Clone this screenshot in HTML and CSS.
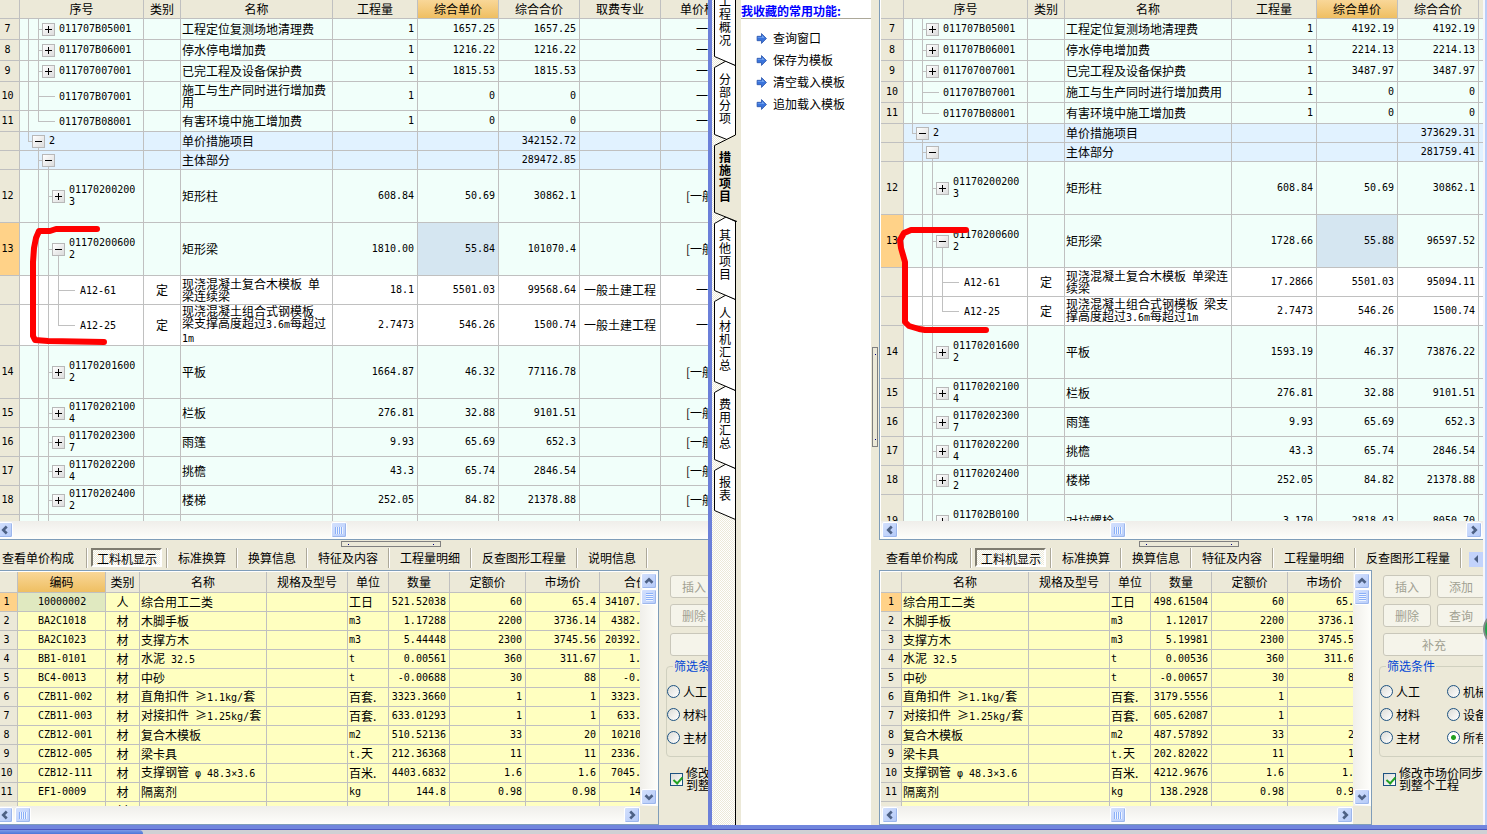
FILE: index.html
```html
<!DOCTYPE html>
<html lang="zh-CN">
<head>
<meta charset="utf-8">
<title>措施项目</title>
<link rel="stylesheet" href="styles.css">
</head>
<body>
<svg class="defs" width="0" height="0" aria-hidden="true">
  <symbol id="chev-left" viewBox="0 0 16 16"><path d="M10 4 L6 8 L10 12" fill="none" stroke="#4d6185" stroke-width="3"/></symbol>
  <symbol id="chev-right" viewBox="0 0 16 16"><path d="M6 4 L10 8 L6 12" fill="none" stroke="#4d6185" stroke-width="3"/></symbol>
  <symbol id="chev-up" viewBox="0 0 16 16"><path d="M4 10 L8 6 L12 10" fill="none" stroke="#4d6185" stroke-width="3"/></symbol>
  <symbol id="chev-down" viewBox="0 0 16 16"><path d="M4 6 L8 10 L12 6" fill="none" stroke="#4d6185" stroke-width="3"/></symbol>
  <symbol id="arrow" viewBox="0 0 10 10"><path d="M1 3 H5 V0.5 L9.5 5 L5 9.5 V7 H1 Z" fill="#3a74dc" stroke="#2450a8" stroke-width="0.7"/><path d="M1.5 3.8 H5.6 V2.2 L7.6 4.4 H1.5 Z" fill="#86b4f5"/></symbol>
</svg>
<div class="desktop">
  <div class="windows">
    <section class="win win-left">
      <div class="upper">
        <div class="sheet">
          <table class="grid green t-left">
            <colgroup><col class="w20"><col class="w124"><col class="w37"><col class="w152"><col class="w85"><col class="w81"><col class="w81"><col class="w81"><col class="w111"></colgroup>
            <thead><tr class="h19"><th></th><th>序号</th><th>类别</th><th>名称</th><th>工程量</th><th class="hot">综合单价</th><th>综合合价</th><th>取费专业</th><th>单价构成文件</th></tr></thead>
            <tbody>
            <tr class="h21"><th>7</th><td class="t2"><div class="node"><button class="tg plus" aria-label="展开"></button><span>011707B05001</span></div></td><td></td><td>工程定位复测场地清理费</td><td class="n">1</td><td class="n">1657.25</td><td class="n">1657.25</td><td></td><td class="p1">一</td></tr>
            <tr class="h21"><th>8</th><td class="t2"><div class="node"><button class="tg plus" aria-label="展开"></button><span>011707B06001</span></div></td><td></td><td>停水停电增加费</td><td class="n">1</td><td class="n">1216.22</td><td class="n">1216.22</td><td></td><td class="p1">一</td></tr>
            <tr class="h21"><th>9</th><td class="t2"><div class="node"><button class="tg plus" aria-label="展开"></button><span>011707007001</span></div></td><td></td><td>已完工程及设备保护费</td><td class="n">1</td><td class="n">1815.53</td><td class="n">1815.53</td><td></td><td class="p1">一</td></tr>
            <tr class="h29"><th>10</th><td class="t2 leaf"><span>011707B07001</span></td><td></td><td>施工与生产同时进行增加费<br>用</td><td class="n">1</td><td class="n">0</td><td class="n">0</td><td></td><td class="p1">一</td></tr>
            <tr class="h21"><th>11</th><td class="t2 leaf end"><span>011707B08001</span></td><td></td><td>有害环境中施工增加费</td><td class="n">1</td><td class="n">0</td><td class="n">0</td><td></td><td class="p1">一</td></tr>
            <tr class="h19 group"><th></th><td class="t1"><div class="node"><button class="tg" aria-label="折叠"></button><span>2</span></div></td><td></td><td>单价措施项目</td><td></td><td></td><td class="n">342152.72</td><td></td><td></td></tr>
            <tr class="h19 group"><th></th><td class="t2s"><div class="node"><button class="tg" aria-label="折叠"></button></div></td><td></td><td>主体部分</td><td></td><td></td><td class="n">289472.85</td><td></td><td></td></tr>
            <tr class="h53"><th>12</th><td class="t3"><div class="node"><button class="tg plus" aria-label="展开"></button><span>01170200200<br>3</span></div></td><td></td><td>矩形柱</td><td class="n">608.84</td><td class="n">50.69</td><td class="n">30862.1</td><td></td><td class="p2">[一般土建]</td></tr>
            <tr class="h53"><th class="cur">13</th><td class="t3 open"><div class="node"><button class="tg" aria-label="折叠"></button><span>01170200600<br>2</span></div></td><td></td><td>矩形梁</td><td class="n">1810.00</td><td class="n sel">55.84</td><td class="n">101070.4</td><td></td><td class="p2">[一般土建]</td></tr>
            <tr class="h29 child"><th></th><td class="t4"><span>A12-61</span></td><td class="c">定</td><td>现浇混凝土复合木模板&ensp;单<br>梁连续梁</td><td class="n">18.1</td><td class="n">5501.03</td><td class="n">99568.64</td><td class="c">一般土建工程</td><td class="p1">一</td></tr>
            <tr class="h41 child"><th></th><td class="t4 end"><span>A12-25</span></td><td class="c">定</td><td>现浇混凝土组合式钢模板<br>梁支撑高度超过<span class="m">3.6m</span>每超过<br><span class="m">1m</span></td><td class="n">2.7473</td><td class="n">546.26</td><td class="n">1500.74</td><td class="c">一般土建工程</td><td class="p1">一</td></tr>
            <tr class="h53"><th>14</th><td class="t3"><div class="node"><button class="tg plus" aria-label="展开"></button><span>01170201600<br>2</span></div></td><td></td><td>平板</td><td class="n">1664.87</td><td class="n">46.32</td><td class="n">77116.78</td><td></td><td class="p2">[一般土建]</td></tr>
            <tr class="h29"><th>15</th><td class="t3"><div class="node"><button class="tg plus" aria-label="展开"></button><span>01170202100<br>4</span></div></td><td></td><td>栏板</td><td class="n">276.81</td><td class="n">32.88</td><td class="n">9101.51</td><td></td><td class="p2">[一般土建]</td></tr>
            <tr class="h29"><th>16</th><td class="t3"><div class="node"><button class="tg plus" aria-label="展开"></button><span>01170202300<br>7</span></div></td><td></td><td>雨篷</td><td class="n">9.93</td><td class="n">65.69</td><td class="n">652.3</td><td></td><td class="p2">[一般土建]</td></tr>
            <tr class="h29"><th>17</th><td class="t3"><div class="node"><button class="tg plus" aria-label="展开"></button><span>01170202200<br>4</span></div></td><td></td><td>挑檐</td><td class="n">43.3</td><td class="n">65.74</td><td class="n">2846.54</td><td></td><td class="p2">[一般土建]</td></tr>
            <tr class="h29"><th>18</th><td class="t3"><div class="node"><button class="tg plus" aria-label="展开"></button><span>01170202400<br>2</span></div></td><td></td><td>楼梯</td><td class="n">252.05</td><td class="n">84.82</td><td class="n">21378.88</td><td></td><td class="p2">[一般土建]</td></tr>
            <tr class="h53"><th></th><td class="t3 bare"></td><td></td><td></td><td></td><td></td><td></td><td></td><td></td></tr>
            </tbody>
          </table>
          <svg class="mark" width="120" height="360" aria-hidden="true"><path d="M97 229 H56 L50 231 H39 L36 238 L34 248 L33 262 V336 L35 340 L48 341 L104 342" fill="none" stroke="#f00" stroke-width="6" stroke-linecap="round" stroke-linejoin="round"/></svg>
        </div>
        <div class="hbar"><button class="sb cut" aria-label="向左"><svg><use href="#chev-left"/></svg></button><span class="gap far"></span><span class="thumb"></span></div>
      </div>
      <div class="split"><i class="grip"></i></div>
      <nav class="tabs">
        <button>查看单价构成</button><button class="on">工料机显示</button><button>标准换算</button><button>换算信息</button><button>特征及内容</button><button>工程量明细</button><button>反查图形工程量</button><button>说明信息</button>
      </nav>
      <div class="lower">
        <div class="pane">
          <div class="view">
          <div class="sheet">
            <table class="grid yellow t-res-left">
              <colgroup><col class="w18"><col class="w88"><col class="w34"><col class="w127"><col class="w81"><col class="w41"><col class="w61"><col class="w76"><col class="w74"><col class="w41"></colgroup>
              <thead><tr class="h21"><th></th><th class="hot">编码</th><th>类别</th><th>名称</th><th>规格及型号</th><th>单位</th><th>数量</th><th>定额价</th><th>市场价</th><th class="part">合价</th></tr></thead>
              <tbody>
              <tr class="h19"><th class="cur">1</th><td class="code pick">10000002</td><td class="c">人</td><td>综合用工二类</td><td></td><td>工日</td><td class="n">521.52038</td><td class="n">60</td><td class="n">65.4</td><td class="n x">34107.</td></tr>
              <tr class="h19"><th>2</th><td class="code">BA2C1018</td><td class="c">材</td><td>木脚手板</td><td></td><td class="m">m3</td><td class="n">1.17288</td><td class="n">2200</td><td class="n">3736.14</td><td class="n x">4382.</td></tr>
              <tr class="h19"><th>3</th><td class="code">BA2C1023</td><td class="c">材</td><td>支撑方木</td><td></td><td class="m">m3</td><td class="n">5.44448</td><td class="n">2300</td><td class="n">3745.56</td><td class="n x">20392.</td></tr>
              <tr class="h19"><th>4</th><td class="code">BB1-0101</td><td class="c">材</td><td>水泥&ensp;<span class="m">32.5</span></td><td></td><td class="m">t</td><td class="n">0.00561</td><td class="n">360</td><td class="n">311.67</td><td class="n x">1.</td></tr>
              <tr class="h19"><th>5</th><td class="code">BC4-0013</td><td class="c">材</td><td>中砂</td><td></td><td class="m">t</td><td class="n">-0.00688</td><td class="n">30</td><td class="n">88</td><td class="n x">-0.</td></tr>
              <tr class="h19"><th>6</th><td class="code">CZB11-002</td><td class="c">材</td><td>直角扣件&ensp;≥<span class="m">1.1kg/</span>套</td><td></td><td>百套.</td><td class="n">3323.3660</td><td class="n">1</td><td class="n">1</td><td class="n x">3323.</td></tr>
              <tr class="h19"><th>7</th><td class="code">CZB11-003</td><td class="c">材</td><td>对接扣件&ensp;≥<span class="m">1.25kg/</span>套</td><td></td><td>百套.</td><td class="n">633.01293</td><td class="n">1</td><td class="n">1</td><td class="n x">633.</td></tr>
              <tr class="h19"><th>8</th><td class="code">CZB12-001</td><td class="c">材</td><td>复合木模板</td><td></td><td class="m">m2</td><td class="n">510.52136</td><td class="n">33</td><td class="n">20</td><td class="n x">10210</td></tr>
              <tr class="h19"><th>9</th><td class="code">CZB12-005</td><td class="c">材</td><td>梁卡具</td><td></td><td><span class="m">t.</span>天</td><td class="n">212.36368</td><td class="n">11</td><td class="n">11</td><td class="n x">2336.</td></tr>
              <tr class="h19"><th>10</th><td class="code">CZB12-111</td><td class="c">材</td><td>支撑钢管&ensp;<span class="m">φ 48.3×3.6</span></td><td></td><td>百米.</td><td class="n">4403.6832</td><td class="n">1.6</td><td class="n">1.6</td><td class="n x">7045.</td></tr>
              <tr class="h19"><th>11</th><td class="code">EF1-0009</td><td class="c">材</td><td>隔离剂</td><td></td><td class="m">kg</td><td class="n">144.8</td><td class="n">0.98</td><td class="n">0.98</td><td class="n x">14</td></tr>
              <tr class="h19"><th></th><td></td><td class="c">材</td><td></td><td></td><td></td><td></td><td></td><td></td><td></td></tr>
              </tbody>
            </table>
          </div>
          <div class="vbar"><button class="sb" aria-label="向上"><svg><use href="#chev-up"/></svg></button><span class="thumb v"></span><span class="fill"></span><button class="sb" aria-label="向下"><svg><use href="#chev-down"/></svg></button></div>
          </div>
          <div class="hbar corner"><button class="sb cut" aria-label="向左"><svg><use href="#chev-left"/></svg></button><span class="thumb"></span><span class="fill"></span><button class="sb" aria-label="向右"><svg><use href="#chev-right"/></svg></button></div>
        </div>
        <form class="side">
          <div class="btns"><button type="button" disabled>插入</button><button type="button" disabled>添加</button><button type="button" disabled>删除</button><button type="button" disabled>查询</button><button type="button" class="wide" disabled>补充</button></div>
          <fieldset><legend>筛选条件</legend>
            <label><input type="radio" name="fa">人工</label><label><input type="radio" name="fa">机械</label>
            <label><input type="radio" name="fa">材料</label><label><input type="radio" name="fa">设备</label>
            <label><input type="radio" name="fa">主材</label><label><input type="radio" name="fa" checked>所有</label>
          </fieldset>
          <label class="sync"><input type="checkbox" checked><span>修改市场价同步<br>到整个工程</span></label>
        </form>
      </div>
    </section>

    <section class="win win-right">
      <nav class="vtabs">
        <svg class="vshape" width="25" height="825" aria-hidden="true">
          <g fill="#fff" stroke="#000" stroke-width="1">
            <path d="M23.5 519.5 L2.5 510.5 V470.5 L14 464 L23.5 468.5"/>
            <path d="M23.5 468.5 L2.5 459.5 V392.5 L14 386 L23.5 390.5"/>
            <path d="M23.5 390.5 L2.5 381.5 V301.5 L14 295 L23.5 299.5"/>
            <path d="M23.5 299.5 L2.5 290.5 V223.5 L14 217 L23.5 221.5"/>
            <path d="M23.5 143 L2.5 134.5 V67.5 L14 61 L23.5 65.5"/>
            <path d="M23.5 65.5 L2.5 56.5 V-5 H23.5"/>
          </g>
          <path d="M25 221.5 L2.5 212.5 V145.5 L14 139 L25 133" fill="#ece9d8"/>
          <path d="M25 221.5 L2.5 212.5 V145.5 L23.5 135" fill="none" stroke="#000"/>
          <path d="M23.5 0 V135 M23.5 221 V825" stroke="#000" stroke-width="1"/>
        </svg>
        <button>工程概况</button><button>分部分项</button><button class="on">措施项目</button><button>其他项目</button><button>人材机汇总</button><button>费用汇总</button><button>报表</button>
      </nav>
      <aside class="fav">
        <h2>我收藏的常用功能:</h2>
        <ul>
          <li><a href="#"><svg><use href="#arrow"/></svg>查询窗口</a></li>
          <li><a href="#"><svg><use href="#arrow"/></svg>保存为模板</a></li>
          <li><a href="#"><svg><use href="#arrow"/></svg>清空载入模板</a></li>
          <li><a href="#"><svg><use href="#arrow"/></svg>追加载入模板</a></li>
        </ul>
      </aside>
      <div class="vsplit"><i class="grip up"></i></div>
      <div class="work">
      <div class="upper framed">
        <div class="sheet">
          <table class="grid green t-right">
            <colgroup><col class="w23"><col class="w124"><col class="w37"><col class="w167"><col class="w85"><col class="w81"><col class="w81"><col class="w81"></colgroup>
            <thead><tr class="h19"><th></th><th>序号</th><th>类别</th><th>名称</th><th>工程量</th><th class="hot">综合单价</th><th>综合合价</th><th></th></tr></thead>
            <tbody>
            <tr class="h21"><th>7</th><td class="t2"><div class="node"><button class="tg plus" aria-label="展开"></button><span>011707B05001</span></div></td><td></td><td>工程定位复测场地清理费</td><td class="n">1</td><td class="n">4192.19</td><td class="n">4192.19</td><td></td></tr>
            <tr class="h21"><th>8</th><td class="t2"><div class="node"><button class="tg plus" aria-label="展开"></button><span>011707B06001</span></div></td><td></td><td>停水停电增加费</td><td class="n">1</td><td class="n">2214.13</td><td class="n">2214.13</td><td></td></tr>
            <tr class="h21"><th>9</th><td class="t2"><div class="node"><button class="tg plus" aria-label="展开"></button><span>011707007001</span></div></td><td></td><td>已完工程及设备保护费</td><td class="n">1</td><td class="n">3487.97</td><td class="n">3487.97</td><td></td></tr>
            <tr class="h21"><th>10</th><td class="t2 leaf"><span>011707B07001</span></td><td></td><td>施工与生产同时进行增加费用</td><td class="n">1</td><td class="n">0</td><td class="n">0</td><td></td></tr>
            <tr class="h21"><th>11</th><td class="t2 leaf end"><span>011707B08001</span></td><td></td><td>有害环境中施工增加费</td><td class="n">1</td><td class="n">0</td><td class="n">0</td><td></td></tr>
            <tr class="h19 group"><th></th><td class="t1"><div class="node"><button class="tg" aria-label="折叠"></button><span>2</span></div></td><td></td><td>单价措施项目</td><td></td><td></td><td class="n">373629.31</td><td></td></tr>
            <tr class="h19 group"><th></th><td class="t2s"><div class="node"><button class="tg" aria-label="折叠"></button></div></td><td></td><td>主体部分</td><td></td><td></td><td class="n">281759.41</td><td></td></tr>
            <tr class="h53"><th>12</th><td class="t3"><div class="node"><button class="tg plus" aria-label="展开"></button><span>01170200200<br>3</span></div></td><td></td><td>矩形柱</td><td class="n">608.84</td><td class="n">50.69</td><td class="n">30862.1</td><td></td></tr>
            <tr class="h53"><th class="cur">13</th><td class="t3 open"><div class="node"><button class="tg" aria-label="折叠"></button><span>01170200600<br>2</span></div></td><td></td><td>矩形梁</td><td class="n">1728.66</td><td class="n sel">55.88</td><td class="n">96597.52</td><td></td></tr>
            <tr class="h29 child"><th></th><td class="t4"><span>A12-61</span></td><td class="c">定</td><td>现浇混凝土复合木模板&ensp;单梁连<br>续梁</td><td class="n">17.2866</td><td class="n">5501.03</td><td class="n">95094.11</td><td></td></tr>
            <tr class="h29 child"><th></th><td class="t4 end"><span>A12-25</span></td><td class="c">定</td><td>现浇混凝土组合式钢模板&ensp;梁支<br>撑高度超过<span class="m">3.6m</span>每超过<span class="m">1m</span></td><td class="n">2.7473</td><td class="n">546.26</td><td class="n">1500.74</td><td></td></tr>
            <tr class="h53"><th>14</th><td class="t3"><div class="node"><button class="tg plus" aria-label="展开"></button><span>01170201600<br>2</span></div></td><td></td><td>平板</td><td class="n">1593.19</td><td class="n">46.37</td><td class="n">73876.22</td><td></td></tr>
            <tr class="h29"><th>15</th><td class="t3"><div class="node"><button class="tg plus" aria-label="展开"></button><span>01170202100<br>4</span></div></td><td></td><td>栏板</td><td class="n">276.81</td><td class="n">32.88</td><td class="n">9101.51</td><td></td></tr>
            <tr class="h29"><th>16</th><td class="t3"><div class="node"><button class="tg plus" aria-label="展开"></button><span>01170202300<br>7</span></div></td><td></td><td>雨篷</td><td class="n">9.93</td><td class="n">65.69</td><td class="n">652.3</td><td></td></tr>
            <tr class="h29"><th>17</th><td class="t3"><div class="node"><button class="tg plus" aria-label="展开"></button><span>01170202200<br>4</span></div></td><td></td><td>挑檐</td><td class="n">43.3</td><td class="n">65.74</td><td class="n">2846.54</td><td></td></tr>
            <tr class="h29"><th>18</th><td class="t3"><div class="node"><button class="tg plus" aria-label="展开"></button><span>01170202400<br>2</span></div></td><td></td><td>楼梯</td><td class="n">252.05</td><td class="n">84.82</td><td class="n">21378.88</td><td></td></tr>
            <tr class="h53"><th>19</th><td class="t3"><div class="node"><button class="tg plus" aria-label="展开"></button><span>011702B0100<br>1</span></div></td><td></td><td>对拉螺栓</td><td class="n">3.170</td><td class="n">2818.43</td><td class="n">8050.70</td><td></td></tr>
            </tbody>
          </table>
          <svg class="mark" width="120" height="360" aria-hidden="true"><path d="M85 230 H40 L30 230 L23 233 L19 240 L20 248 L24 262 V322 L28 326 L38 329 L44 330 H105" fill="none" stroke="#f00" stroke-width="6" stroke-linecap="round" stroke-linejoin="round"/></svg>
        </div>
        <div class="hbar"><button class="sb" aria-label="向左"><svg><use href="#chev-left"/></svg></button><span class="gap mid"></span><span class="thumb"></span><span class="fill"></span><button class="sb" aria-label="向右"><svg><use href="#chev-right"/></svg></button></div>
      </div>
      <div class="split"><i class="grip"></i></div>
      <nav class="tabs">
        <button>查看单价构成</button><button class="on">工料机显示</button><button>标准换算</button><button>换算信息</button><button>特征及内容</button><button>工程量明细</button><button>反查图形工程量</button><button class="more" aria-label="向左滚动"><svg width="14" height="14"><path d="M9 3 V11 L5 7 Z" fill="#4d6185"/></svg></button>
      </nav>
      <div class="lower">
        <div class="pane framed">
          <div class="view">
          <div class="sheet">
            <table class="grid yellow t-res-right">
              <colgroup><col class="w21"><col class="w127"><col class="w81"><col class="w41"><col class="w61"><col class="w76"><col class="w66"></colgroup>
              <thead><tr class="h21"><th></th><th>名称</th><th>规格及型号</th><th>单位</th><th>数量</th><th>定额价</th><th class="last">市场价</th></tr></thead>
              <tbody>
              <tr class="h19"><th class="cur">1</th><td>综合用工二类</td><td></td><td>工日</td><td class="n">498.61504</td><td class="n">60</td><td class="n x">65.</td></tr>
              <tr class="h19"><th>2</th><td>木脚手板</td><td></td><td class="m">m3</td><td class="n">1.12017</td><td class="n">2200</td><td class="n x">3736.1</td></tr>
              <tr class="h19"><th>3</th><td>支撑方木</td><td></td><td class="m">m3</td><td class="n">5.19981</td><td class="n">2300</td><td class="n x">3745.5</td></tr>
              <tr class="h19"><th>4</th><td>水泥&ensp;<span class="m">32.5</span></td><td></td><td class="m">t</td><td class="n">0.00536</td><td class="n">360</td><td class="n x">311.6</td></tr>
              <tr class="h19"><th>5</th><td>中砂</td><td></td><td class="m">t</td><td class="n">-0.00657</td><td class="n">30</td><td class="n x">8</td></tr>
              <tr class="h19"><th>6</th><td>直角扣件&ensp;≥<span class="m">1.1kg/</span>套</td><td></td><td>百套.</td><td class="n">3179.5556</td><td class="n">1</td><td class="x"></td></tr>
              <tr class="h19"><th>7</th><td>对接扣件&ensp;≥<span class="m">1.25kg/</span>套</td><td></td><td>百套.</td><td class="n">605.62087</td><td class="n">1</td><td class="x"></td></tr>
              <tr class="h19"><th>8</th><td>复合木模板</td><td></td><td class="m">m2</td><td class="n">487.57892</td><td class="n">33</td><td class="n x">2</td></tr>
              <tr class="h19"><th>9</th><td>梁卡具</td><td></td><td><span class="m">t.</span>天</td><td class="n">202.82022</td><td class="n">11</td><td class="n x">1</td></tr>
              <tr class="h19"><th>10</th><td>支撑钢管&ensp;<span class="m">φ 48.3×3.6</span></td><td></td><td>百米.</td><td class="n">4212.9676</td><td class="n">1.6</td><td class="n x">1.</td></tr>
              <tr class="h19"><th>11</th><td>隔离剂</td><td></td><td class="m">kg</td><td class="n">138.2928</td><td class="n">0.98</td><td class="n x">0.9</td></tr>
              <tr class="h19"><th></th><td></td><td></td><td></td><td></td><td></td><td class="x"></td></tr>
              </tbody>
            </table>
          </div>
          <div class="vbar"><button class="sb" aria-label="向上"><svg><use href="#chev-up"/></svg></button><span class="thumb v"></span><span class="fill"></span><button class="sb" aria-label="向下"><svg><use href="#chev-down"/></svg></button></div>
          </div>
          <div class="hbar corner"><button class="sb" aria-label="向左"><svg><use href="#chev-left"/></svg></button><span class="gap mid"></span><span class="thumb"></span><span class="fill"></span><button class="sb" aria-label="向右"><svg><use href="#chev-right"/></svg></button></div>
        </div>
        <form class="side">
          <div class="btns"><button type="button" disabled>插入</button><button type="button" disabled>添加</button><button type="button" disabled>删除</button><button type="button" disabled>查询</button><button type="button" class="wide" disabled>补充</button></div>
          <fieldset><legend>筛选条件</legend>
            <label><input type="radio" name="fb">人工</label><label><input type="radio" name="fb">机械</label>
            <label><input type="radio" name="fb">材料</label><label><input type="radio" name="fb">设备</label>
            <label><input type="radio" name="fb">主材</label><label><input type="radio" name="fb" checked>所有</label>
          </fieldset>
          <label class="sync"><input type="checkbox" checked><span>修改市场价同步<br>到整个工程</span></label>
        </form>
      </div>
      </div>
      <div class="edge"><i class="orb"></i></div>
    </section>
  </div>
  <footer class="taskbar"><span class="task"></span></footer>
</div>
</body>
</html>
```

FILE: styles.css
```css
* { box-sizing: border-box; }
body {
  margin: 0;
  font: 12px/12px "Noto Sans CJK SC", "Liberation Sans", sans-serif;
  color: #000;
  background: #ece9d8;
}
button { font: inherit; color: inherit; margin: 0; padding: 0; border: 0; background: none; }
.defs { display: none; }
.desktop { display: flex; flex-direction: column; height: 100vh; overflow: hidden; }
.windows { flex: 1; min-height: 0; display: grid; grid-template-columns: minmax(0, 712fr) minmax(0, 775fr); }
.win { min-width: 0; min-height: 0; border-bottom: 4px solid #7186dd; background: #ece9d8; }
.win-left { display: flex; flex-direction: column; border-right: 4px solid #6b7fd9; overflow: hidden; }
.win-right { display: flex; overflow: hidden; }
.work { flex: 1; min-width: 0; display: flex; flex-direction: column; }
.taskbar { height: 5px; background: #d0d0d4; border-top: 1px solid #4b55c0; }
.task { display: block; width: 143px; height: 4px; background: linear-gradient(#7d9be8, #4d75d8); border-radius: 0 4px 0 0; }

/* upper sheet */
.upper { flex: 1; min-height: 0; display: flex; flex-direction: column; border-bottom: 1px solid #7f9db9; }
.framed { border-left: 1px solid #7f9db9; padding-left: 1px; background: #fff; }
.sheet { flex: 1; min-width: 0; min-height: 0; overflow: hidden; position: relative; }
.mark { position: absolute; left: 0; top: 0; pointer-events: none; }

.grid { table-layout: fixed; border-collapse: separate; border-spacing: 0; }
.t-left { width: 772px; }
.t-right { width: 679px; }
.t-res-left { width: 641px; }
.t-res-right { width: 473px; }
.grid th, .grid td {
  padding: 0 1px; border: 0 solid #c0c0c0; border-width: 0 1px 1px 0;
  overflow: hidden; white-space: nowrap; text-align: left; vertical-align: middle; font-weight: normal;
}
.grid th { background: #ece9d8; text-align: center; }
.grid tbody th { font: 10px/12px "DejaVu Sans Mono", monospace; padding: 0; }
.win-left .grid tbody th { padding-right: 4px; }
.grid th.hot { background: linear-gradient(#f9d798, #efbf62); }
.grid tbody th.cur { background: #ffd288; }
.green td { background-color: #f1fffa; }
.green .group td { background-color: #e1f2ff; }
.green .child td { background-color: #fff; }
.green td.sel { background-color: #d5e6f1; }
.yellow td { background-color: #ffffc0; }
.yellow td.pick { background-color: #e0e9c0; }
.grid td.n, .grid td.m, .m, .grid td.code, .node span, .leaf span, .t4 span { font-family: "DejaVu Sans Mono", monospace; font-size: 10px; line-height: 12px; }
.grid td.n { text-align: right; padding-right: 3px; }
.grid td.x { padding-right: 0; border-right: 0; }
.grid td.c { text-align: center; }
.grid td.code { padding-left: 20px; }
.grid td.p1 { padding-left: 35px; }
.grid td.p2 { padding-left: 25px; }
.grid th.part { text-align: left; padding-left: 24px; }
.grid th.last { text-align: right; padding-right: 12px; border-right: 0; }

.h19 { height: 19px; } .h21 { height: 21px; } .h29 { height: 29px; } .h41 { height: 41px; } .h53 { height: 53px; }
.w18 { width: 18px; } .w20 { width: 20px; } .w21 { width: 21px; } .w23 { width: 23px; } .w34 { width: 34px; }
.w37 { width: 37px; } .w41 { width: 41px; } .w61 { width: 61px; } .w66 { width: 66px; } .w74 { width: 74px; }
.w76 { width: 76px; } .w81 { width: 81px; } .w85 { width: 85px; } .w88 { width: 88px; } .w111 { width: 111px; }
.w124 { width: 124px; } .w127 { width: 127px; } .w152 { width: 152px; } .w167 { width: 167px; }

/* tree guides */
.grid td { --ln: linear-gradient(#c0c0c0, #c0c0c0); background-repeat: no-repeat; }
.node { display: flex; align-items: center; gap: 4px; }
.grid .t1 { padding-left: 12px; background-image: var(--ln), var(--ln), var(--ln); background-position: 8px 0, 8px 50%, 18px 100%; background-size: 1px 50%, 5px 1px, 1px 50%; }
.grid .t2 { padding-left: 22px; background-image: var(--ln), var(--ln), var(--ln); background-position: 8px 0, 18px 0, 18px 50%; background-size: 1px 100%, 1px 100%, 5px 1px; }
.grid .t2.leaf { padding-left: 39px; background-size: 1px 100%, 1px 100%, 17px 1px; }
.grid .t2.end { background-size: 1px 100%, 1px 50%, 17px 1px; }
.grid .t2s { padding-left: 22px; background-image: var(--ln), var(--ln), var(--ln); background-position: 18px 0, 28px 100%, 18px 50%; background-size: 1px 100%, 1px 50%, 5px 1px; }
.grid .t3 { padding-left: 32px; background-image: var(--ln), var(--ln), var(--ln); background-position: 18px 0, 28px 0, 28px 50%; background-size: 1px 100%, 1px 100%, 5px 1px; }
.grid .t3.bare { background-size: 1px 100%, 1px 100%, 0 0; }
.grid .t3.open { background-image: var(--ln), var(--ln), var(--ln), var(--ln); background-position: 18px 0, 28px 0, 28px 50%, 38px 100%; background-size: 1px 100%, 1px 100%, 5px 1px, 1px 50%; }
.grid .t4 { padding-left: 60px; background-image: var(--ln), var(--ln), var(--ln), var(--ln); background-position: 18px 0, 28px 0, 38px 0, 38px 50%; background-size: 1px 100%, 1px 100%, 1px 100%, 17px 1px; }
.grid .t4.end { background-size: 1px 100%, 1px 100%, 1px 50%, 17px 1px; }
.tg {
  flex: none; width: 13px; height: 13px; border: 1px solid #b8b8b8;
  background: linear-gradient(#000, #000) center / 7px 1px no-repeat, linear-gradient(135deg, #fff, #dcdcdc);
}
.tg.plus { background: linear-gradient(#000, #000) center / 7px 1px no-repeat, linear-gradient(#000, #000) center / 1px 7px no-repeat, linear-gradient(135deg, #fff, #dcdcdc); }

/* scroll bars */
.hbar { flex: none; height: 18px; display: flex; align-items: center; gap: 2px; padding: 0 1px; background: linear-gradient(#efeeea, #fefefb); overflow: hidden; }
.hbar.corner { padding-right: 18px; }
.vbar { flex: none; width: 18px; display: flex; flex-direction: column; align-items: center; padding: 1px 0; background: linear-gradient(90deg, #f0efea, #fefefb); }
.sb, .thumb { flex: none; width: 16px; height: 16px; border: 1px solid #fff; border-radius: 2px; background: linear-gradient(135deg, #d3e0fd, #b3c9f8); box-shadow: inset -1px -1px #9db7ec; }
.sb svg { display: block; width: 14px; height: 14px; }
.sb.cut { margin-left: -4px; }
.thumb { background: repeating-linear-gradient(90deg, #8cb0f8 0 1px, #eef4fe 1px 2px) center / 8px 7px no-repeat, linear-gradient(135deg, #d3e0fd, #b9cefb); }
.thumb.v { background: repeating-linear-gradient(#8cb0f8 0 1px, #eef4fe 1px 2px) center / 7px 8px no-repeat, linear-gradient(135deg, #d3e0fd, #b9cefb); }
.fill { flex: 1; }
.gap { flex: none; }
.gap.far { width: 314px; }
.gap.mid { width: 208px; }

.split { flex: none; height: 8px; display: flex; justify-content: center; padding: 1px 0 0 74px; }
.win-right .split { padding-left: 16px; }
.grip {
  --dot: linear-gradient(#000080, #000080);
  flex: none; width: 100px; height: 6px; border: 1px solid #808080;
  background: var(--dot) 6px 2px / 1px 1px no-repeat, var(--dot) 91px 2px / 1px 1px no-repeat, #ece9d8;
}
.grip.up { width: 6px; height: 100px; background: var(--dot) 2px 6px / 1px 1px no-repeat, var(--dot) 2px 91px / 1px 1px no-repeat, #ece9d8; }

.tabs { flex: none; height: 22px; display: flex; position: relative; z-index: 0; overflow: hidden; }
.tabs button { flex: none; position: relative; height: 20px; padding: 0 12px 0 10px; white-space: nowrap; box-shadow: inset -1px 0 #fff, inset -2px 0 #aca899; }
.tabs button:first-child { padding-left: 2px; padding-right: 14px; }
.win-right .tabs button:first-child { padding-left: 7px; padding-right: 14px; }
.tabs .on { padding: 2px 11px 0 9px; }
.tabs .on::before { content: ""; position: absolute; z-index: -1; inset: 0 6px 1px 3px; border: 2px solid; border-color: #7f7c70 #fff #fff #7f7c70; background: repeating-conic-gradient(#fff 0 25%, #ece9d8 0 50%) 0 0 / 2px 2px; }
.tabs button.more { margin: 4px 0 0 auto; width: 14px; height: 15px; padding: 0; background: #c3d3fb; box-shadow: none; }

/* resource pane */
.lower { flex: none; height: 255px; display: flex; }
.pane { flex: 1; min-width: 0; display: flex; flex-direction: column; border: 1px solid #7f9db9; border-left: 0; padding-top: 1px; background: #fff; }
.pane.framed { border-left: 1px solid #7f9db9; }
.view { flex: 1; min-height: 0; display: flex; }
.corner { background: linear-gradient(90deg, transparent calc(100% - 18px), #ece9d8 calc(100% - 18px)), linear-gradient(#efeeea, #fefefb); }
.side { flex: none; width: 111px; padding: 5px 0 0 11px; overflow: hidden; }
.win-left .side { width: 49px; }
.btns { width: 102px; display: grid; grid-template-columns: 48px 48px; gap: 6px; }
.btns button { height: 23px; border: 1px solid #c9c7ba; border-radius: 3px; background: #f5f4ea; color: #a1a192; }
.btns .wide { grid-column: 1 / 3; }
.side fieldset { width: 130px; height: 97px; margin: 4px 0 0 -4px; padding: 8px 0 0 0; border: 1px solid #d0d0bf; border-radius: 4px; display: grid; grid-template-columns: 67px 60px; grid-auto-rows: 23px; align-content: start; }
.side legend { margin-left: 6px; padding: 0 1px; color: #0046d5; }
.side label { display: flex; align-items: center; gap: 3px; white-space: nowrap; }
.side input { appearance: none; flex: none; position: relative; width: 13px; height: 13px; margin: 0; border: 1px solid #1d5281; background: linear-gradient(135deg, #dcdcd7, #fff); }
.side input[type="radio"] { border-radius: 50%; }
.side input[type="radio"]:checked { background: radial-gradient(circle, #21a121 0 2px, transparent 3px), #fff; }
.side input[type="checkbox"]:checked::after { content: ""; position: absolute; left: 4px; top: 1px; width: 4px; height: 7px; border: solid #21a121; border-width: 0 2px 2px 0; transform: rotate(42deg); }
.side .sync { margin-top: 10px; }

/* vertical tabs */
.vtabs { flex: none; width: 24px; position: relative; display: flex; flex-direction: column; background: repeating-conic-gradient(#fff 0 25%, #ece9d8 0 50%) 0 0 / 2px 2px; }
.vshape { position: absolute; left: 0; top: 0; }
.vtabs button { position: relative; width: 26px; padding: 16px 7px 10px; line-height: 13px; white-space: normal; word-break: break-all; }
.vtabs button:nth-of-type(1) { margin-top: -22px; }
.vtabs .on { font-weight: bold; }
.fav { flex: none; width: 135px; border-left: 5px solid #ece9d8; background: #fff; }
.fav h2 { margin: 0; padding: 5px 0 1px; font-size: 12px; line-height: 12px; color: #00f; border-bottom: 1px solid #aca899; white-space: nowrap; }
.fav ul { list-style: none; margin: 0; padding: 8px 0 0 15px; }
.fav a { display: flex; align-items: center; gap: 6px; height: 22px; color: #000; text-decoration: none; }
.fav svg { width: 11px; height: 11px; }
.vsplit { flex: none; width: 8px; display: flex; align-items: center; padding: 0 1px; }
.vsplit .grip { margin-bottom: 32px; }
.edge { flex: none; width: 4px; position: relative; border-right: 2px solid #b9ccf8; background: #f7f7fb; }
.orb { position: absolute; left: 0; top: 612px; width: 34px; height: 34px; border-radius: 50%; border: 2px solid #7f8a86; background: #1fa34a; }
```
